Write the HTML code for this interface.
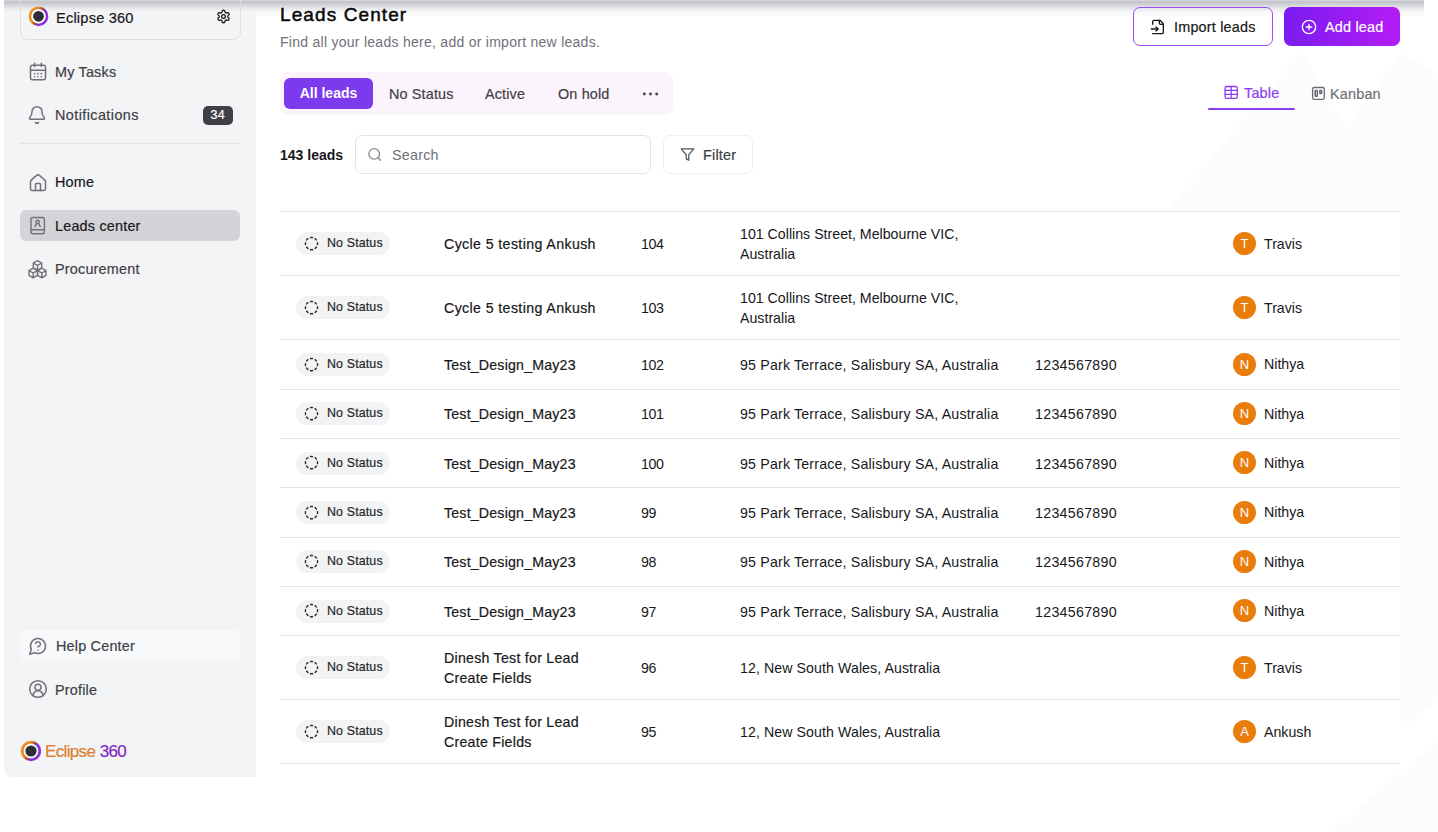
<!DOCTYPE html>
<html><head><meta charset="utf-8">
<style>
*{box-sizing:border-box;margin:0;padding:0}
html,body{width:1438px;height:832px;overflow:hidden;background:#fff;font-family:"Liberation Sans",sans-serif;color:#18181b}
.a{position:absolute;white-space:nowrap}
#side{position:absolute;left:4px;top:0;width:252px;height:777px;background:#f3f4f6;border-bottom-left-radius:8px}
#topsh{position:absolute;left:4px;top:0;width:1420px;height:17px;background:linear-gradient(#dcdde0 0,#c3c4c7 1.6px,#c8c9cc 3px,#dadbde 6px,#ebecee 9px,rgba(246,246,248,0.8) 12.5px,rgba(255,255,255,0) 17px)}
.card{position:absolute;left:20px;top:-20px;width:221px;height:59.5px;border:1px solid #dcdee2;border-radius:8px}
.nt{position:absolute;font-size:14.4px;line-height:16px;color:#3f3f46;letter-spacing:0.2px;white-space:nowrap}
.md{-webkit-text-stroke:0.2px currentColor}
.ic{position:absolute;fill:none;stroke:#71717a;stroke-width:1.8;stroke-linecap:round;stroke-linejoin:round;overflow:visible}
h1{position:absolute;left:280px;top:4px;font-size:19px;font-weight:normal;-webkit-text-stroke:0.5px #09090b;letter-spacing:1.1px;color:#09090b;line-height:22px}
.sub{position:absolute;left:280px;top:34px;font-size:14px;color:#71717a;letter-spacing:0.27px;line-height:16px}
.tabs{position:absolute;left:280px;top:72px;width:393px;height:43px;background:#fcf4fd;border-radius:7px}
.tab{position:absolute;top:6.5px;height:31px;line-height:31px;font-size:14.4px;color:#3f3f46;letter-spacing:0.15px;white-space:nowrap}
.tab.on{top:6px;left:4px;width:89px;background:#7c3aed;color:#fff;border-radius:6px;font-weight:bold;text-align:center;letter-spacing:0;font-size:14px}
.row{position:absolute;left:280px;width:1120px;border-top:1px solid #e4e4e7}
.pill{position:absolute;left:16px;width:94px;height:23px;border-radius:12px;background:#f2f3f5;font-size:12.4px;color:#27272a;letter-spacing:0.15px}
.pill svg{position:absolute;left:7px;top:3.5px}
.pill span{position:absolute;left:31px;top:4px;line-height:15px;white-space:nowrap}
.c{position:absolute;font-size:14.2px;line-height:20px;color:#18181b;letter-spacing:0.3px}
.nm{left:164px;width:175px;color:#18181b}
.num{left:361px}
.addr{left:460px;width:270px}
.ph{left:755px}
.av{position:absolute;left:953px;width:23px;height:23px;border-radius:50%;background:#ea7c0c;color:#fff;font-size:13px;text-align:center;line-height:23px}
.own{left:984px}
.btn{position:absolute;top:7px;height:39px;border-radius:7px}
</style></head><body>
<div id="side"></div>
<svg class="a" style="left:0;top:0" width="1438" height="832"><polygon points="1165,212 1302,52 1346,127 1402,52 1438,75 1438,832 1330,832 1438,740 1438,700 1400,730 1400,212" fill="#000" fill-opacity="0.013"/></svg>
<div id="topsh"></div>

<!-- workspace card -->
<div class="card"></div>
<svg class="a" style="left:28px;top:6px" width="21" height="21" viewBox="0 0 21 21">
  <defs><linearGradient id="lg1" x1="0" y1="0.25" x2="1" y2="0.75"><stop offset="0.3" stop-color="#ee8a1f"/><stop offset="0.5" stop-color="#a0522d"/><stop offset="0.62" stop-color="#8d2fd6"/></linearGradient></defs>
  <circle cx="10.5" cy="10.3" r="8.6" fill="none" stroke="url(#lg1)" stroke-width="2.5"/>
  <circle cx="10.5" cy="10.3" r="6.6" fill="#fff" opacity="0.85"/>
  <circle cx="10.5" cy="10.3" r="5.4" fill="#2d2d33"/>
</svg>
<div class="nt md" style="left:56px;top:9.5px;color:#18181b;font-size:14.6px">Eclipse 360</div>
<svg class="ic" style="left:215.5px;top:8.5px;stroke:#18181b;stroke-width:2.1" width="15" height="15" viewBox="0 0 24 24"><path d="M12.22 2h-.44a2 2 0 0 0-2 2v.18a2 2 0 0 1-1 1.730l-.43.25a2 2 0 0 1-2 0l-.15-.08a2 2 0 0 0-2.73.73l-.22.38a2 2 0 0 0 .73 2.730l.15.1a2 2 0 0 1 1 1.72v.51a2 2 0 0 1-1 1.74l-.15.09a2 2 0 0 0-.73 2.73l.22.38a2 2 0 0 0 2.73.73l.15-.08a2 2 0 0 1 2 0l.43.25a2 2 0 0 1 1 1.73V20a2 2 0 0 0 2 2h.44a2 2 0 0 0 2-2v-.18a2 2 0 0 1 1-1.73l.43-.25a2 2 0 0 1 2 0l.15.08a2 2 0 0 0 2.730-.73l.22-.39a2 2 0 0 0-.73-2.73l-.15-.08a2 2 0 0 1-1-1.74v-.5a2 2 0 0 1 1-1.74l.15-.09a2 2 0 0 0 .73-2.73l-.22-.38a2 2 0 0 0-2.73-.73l-.15.08a2 2 0 0 1-2 0l-.43-.25a2 2 0 0 1-1-1.73V4a2 2 0 0 0-2-2z"/><circle cx="12" cy="12" r="3"/></svg>

<!-- nav (lucide 20px) -->
<svg class="ic" style="left:27.5px;top:62.3px" width="20" height="20" viewBox="0 0 24 24"><rect x="3" y="4" width="18" height="17.3" rx="2"/><path d="M3 10h18M8 1.5v4M16 1.5v4"/><path d="M8 14h.01M12 14h.01M16 14h.01M8 17.7h.01M12 17.7h.01M16 17.7h.01" stroke-width="2"/></svg>
<div class="nt md" style="left:55px;top:64px">My Tasks</div>

<svg class="ic" style="left:27.4px;top:104.9px" width="20" height="20" viewBox="0 0 24 24"><path d="M10.268 21a2 2 0 0 0 3.464 0"/><path d="M3.262 15.326A1 1 0 0 0 4 17h16a1 1 0 0 0 .74-1.673C19.41 13.956 18 12.499 18 8A6 6 0 0 0 6 8c0 4.499-1.411 5.956-2.738 7.326"/></svg>
<div class="nt md" style="left:55px;top:107px;letter-spacing:0.42px">Notifications</div>
<div class="a" style="left:203px;top:106px;width:29.5px;height:19px;border-radius:5px;background:#3f3f46;color:#fff;font-size:12.5px;line-height:19px;text-align:center;letter-spacing:0.3px;-webkit-text-stroke:0.2px #fff">34</div>

<div class="a" style="left:20px;top:143px;width:220px;height:1px;background:#e2e3e6"></div>

<svg class="ic" style="left:27.5px;top:172.6px" width="20" height="20" viewBox="0 0 24 24"><path d="M15 21v-7.5a1 1 0 0 0-1-1h-4a1 1 0 0 0-1 1V21"/><path d="M3 10a2 2 0 0 1 .709-1.528l7-5.999a2 2 0 0 1 2.582 0l7 5.999A2 2 0 0 1 21 10v9a2 2 0 0 1-2 2H5a2 2 0 0 1-2-2z"/></svg>
<div class="nt md" style="left:55px;top:174px;color:#18181b">Home</div>

<div class="a" style="left:20px;top:210px;width:220px;height:31px;border-radius:6px;background:#d4d4d8"></div>
<svg class="ic" style="left:0;top:0;stroke-width:1.4" width="1" height="1"><rect x="31" y="217.5" width="13.4" height="16.3" rx="2"/><path d="M31 229.7H44.4"/><circle cx="37.6" cy="221.9" r="1.7"/><path d="M35 226.6l1.5-3M40.2 226.6l-1.5-3"/></svg>
<div class="nt md" style="left:55px;top:218px;color:#18181b">Leads center</div>

<svg class="ic" style="left:0;top:0;stroke-width:1.4" width="1" height="1">
<path d="M37.5 260.6l4.2 2.4v4.8l-4.2 2.4-4.2-2.4v-4.8z M33.3 263l4.2 2.4 4.2-2.4 M37.5 265.4v4.8"/>
<path d="M33.2 268.2l4.2 2.4v4.8l-4.2 2.4-4.2-2.4v-4.8z M29 270.6l4.2 2.4 4.2-2.4 M33.2 273v4.8"/>
<path d="M41.8 268.2l4.2 2.4v4.8l-4.2 2.4-4.2-2.4v-4.8z M37.6 270.6l4.2 2.4 4.2-2.4 M41.8 273v4.8"/>
</svg>
<div class="nt md" style="left:55px;top:261px">Procurement</div>

<div class="a" style="left:20px;top:630px;width:220px;height:31px;border-radius:6px;background:#f8f9fa"></div>
<svg class="ic" style="left:28.4px;top:635.7px" width="20" height="20" viewBox="0 0 24 24"><path d="M7.9 20A9 9 0 1 0 4 16.1L2 22Z"/><path d="M9.09 9a3 3 0 0 1 5.83 1c0 2-3 3-3 3"/><path d="M12 17h.01"/></svg>
<div class="nt md" style="left:56px;top:638px">Help Center</div>

<svg class="ic" style="left:27.6px;top:679.3px" width="20" height="20" viewBox="0 0 24 24"><path d="M18 20a6 6 0 0 0-12 0"/><circle cx="12" cy="10" r="3.6"/><circle cx="12" cy="12" r="10"/></svg>
<div class="nt md" style="left:55px;top:682px">Profile</div>

<!-- brand -->
<svg class="a" style="left:20px;top:740px" width="22" height="22" viewBox="0 0 22 22">
  <defs><linearGradient id="lg2" x1="0" y1="0.25" x2="1" y2="0.75"><stop offset="0.3" stop-color="#ee8a1f"/><stop offset="0.5" stop-color="#a0522d"/><stop offset="0.62" stop-color="#8d2fd6"/></linearGradient></defs>
  <circle cx="11" cy="11" r="8.8" fill="none" stroke="url(#lg2)" stroke-width="2.8"/>
  <circle cx="11" cy="11" r="6.6" fill="#fff" opacity="0.8"/>
  <circle cx="11" cy="11" r="5.6" fill="#2d2d33"/>
</svg>
<div class="a md" style="left:45px;top:742px;font-size:17px;line-height:20px;letter-spacing:-0.2px"><span style="color:#dc7f30;letter-spacing:-0.65px">Eclipse</span> <span style="color:#8229bd;letter-spacing:-0.7px">360</span></div>

<!-- header -->
<h1>Leads Center</h1>
<div class="sub">Find all your leads here, add or import new leads.</div>

<div class="btn" style="left:1133px;width:140px;border:1.5px solid #9b4ff0;background:transparent"></div>
<svg class="ic" style="left:1149.7px;top:19px;stroke:#18181b;stroke-width:2" width="16" height="16" viewBox="0 0 24 24"><path d="M4 22h14a2 2 0 0 0 2-2V7l-5-5H6a2 2 0 0 0-2 2v4"/><path d="M14 2v4a2 2 0 0 0 2 2h4"/><path d="M2 15h10"/><path d="m9 18 3-3-3-3"/></svg>
<div class="a md" style="left:1174px;top:18.5px;font-size:14.4px;line-height:16px;color:#18181b;letter-spacing:0.2px">Import leads</div>

<div class="btn" style="left:1284px;width:116px;background:linear-gradient(90deg,#7a1cf0,#b51cf6)"></div>
<svg class="ic" style="left:1301px;top:18.5px;stroke:#fff;stroke-width:2" width="16" height="16" viewBox="0 0 24 24"><circle cx="12" cy="12" r="10"/><path d="M8 12h8M12 8v8"/></svg>
<div class="a md" style="left:1325px;top:18.5px;font-size:14.4px;line-height:16px;color:#fff;letter-spacing:0.2px">Add lead</div>

<!-- tabs -->
<div class="tabs">
  <div class="tab on">All leads</div>
  <div class="tab md" style="left:109px">No Status</div>
  <div class="tab md" style="left:205px">Active</div>
  <div class="tab md" style="left:278px">On hold</div>
  <svg class="a" style="left:362px;top:20px" width="18" height="4" viewBox="0 0 18 4"><circle cx="2.3" cy="2" r="1.4" fill="#3f3f46"/><circle cx="8.5" cy="2" r="1.4" fill="#3f3f46"/><circle cx="14.7" cy="2" r="1.4" fill="#3f3f46"/></svg>
</div>

<!-- view toggle -->
<svg class="ic" style="left:0;top:0;stroke:#8b3ef0;stroke-width:1.3" width="1" height="1"><rect x="1225.1" y="86.5" width="12.2" height="11.8" rx="1.6"/><path d="M1225.1 90.4h12.2M1225.1 94.4h12.2M1231.2 86.5v11.8"/></svg>
<div class="a md" style="left:1244px;top:84.5px;font-size:14.4px;line-height:16px;color:#8b3ef0;letter-spacing:0.2px">Table</div>
<div class="a" style="left:1208px;top:108px;width:87px;height:2px;background:#8b3ef0;border-radius:1px"></div>
<svg class="ic" style="left:0;top:0;stroke:#6b6b73;stroke-width:1.3" width="1" height="1"><rect x="1312.6" y="87.5" width="11.7" height="11.8" rx="1.6"/><rect x="1315.2" y="90.5" width="2.1" height="5.8" rx="0.5" stroke-width="1.5"/><rect x="1319.8" y="90.5" width="1.8" height="2.9" rx="0.5" stroke-width="1.5"/></svg>
<div class="a md" style="left:1330px;top:86px;font-size:14.4px;line-height:16px;color:#71717a;letter-spacing:0.2px">Kanban</div>

<!-- toolbar -->
<div class="a" style="left:280px;top:147px;font-size:14px;line-height:16px;font-weight:bold;color:#18181b">143 leads</div>
<div class="a" style="left:355px;top:135px;width:296px;height:39px;border:1px solid #e4e4e7;border-radius:7px"></div>
<svg class="ic" style="left:0;top:0;stroke:#85858d;stroke-width:1.3" width="1" height="1"><circle cx="374.2" cy="153.9" r="5.3"/><path d="M378.1 157.8l2.4 2.5"/></svg>
<div class="a" style="left:392px;top:147px;font-size:14.4px;line-height:16px;color:#71717a;letter-spacing:0.2px">Search</div>
<div class="a" style="left:663px;top:135px;width:90px;height:39px;border:1px solid #f0f0f2;border-radius:7px"></div>
<svg class="ic" style="left:680px;top:146.8px;stroke:#52525b;stroke-width:2" width="15" height="15" viewBox="0 0 24 24"><polygon points="22 3 2 3 10 12.46 10 19 14 21 14 12.46 22 3"/></svg>
<div class="a md" style="left:703px;top:147px;font-size:14.4px;line-height:16px;color:#3f3f46;letter-spacing:0.2px">Filter</div>

<div class="row" style="top:211.4px;height:64px;"><div class="pill" style="top:20.0px"><svg width="17" height="17" viewBox="0 0 17 17"><path d="M14.41 6.07A6.1 6.1 0 0 1 14.41 9.13M13.76 10.70A6.1 6.1 0 0 1 11.60 12.86M10.03 13.51A6.1 6.1 0 0 1 6.97 13.51M5.40 12.86A6.1 6.1 0 0 1 3.24 10.70M2.59 9.13A6.1 6.1 0 0 1 2.59 6.07M3.24 4.50A6.1 6.1 0 0 1 5.40 2.34M6.97 1.69A6.1 6.1 0 0 1 10.03 1.69M11.60 2.34A6.1 6.1 0 0 1 13.76 4.50" fill="none" stroke="#27272a" stroke-width="1.35"/></svg><span class="md">No Status</span></div><div class="c nm md" style="top:22.0px;letter-spacing:0.38px">Cycle 5 testing Ankush</div><div class="c num" style="top:22.0px;letter-spacing:-0.4px">104</div><div class="c addr" style="top:12.0px;letter-spacing:0.0px">101 Collins Street, Melbourne VIC, Australia</div><div class="av" style="top:19.5px">T</div><div class="c own" style="top:21.3px;letter-spacing:0">Travis</div></div>
<div class="row" style="top:275.4px;height:64px;"><div class="pill" style="top:20.0px"><svg width="17" height="17" viewBox="0 0 17 17"><path d="M14.41 6.07A6.1 6.1 0 0 1 14.41 9.13M13.76 10.70A6.1 6.1 0 0 1 11.60 12.86M10.03 13.51A6.1 6.1 0 0 1 6.97 13.51M5.40 12.86A6.1 6.1 0 0 1 3.24 10.70M2.59 9.13A6.1 6.1 0 0 1 2.59 6.07M3.24 4.50A6.1 6.1 0 0 1 5.40 2.34M6.97 1.69A6.1 6.1 0 0 1 10.03 1.69M11.60 2.34A6.1 6.1 0 0 1 13.76 4.50" fill="none" stroke="#27272a" stroke-width="1.35"/></svg><span class="md">No Status</span></div><div class="c nm md" style="top:22.0px;letter-spacing:0.38px">Cycle 5 testing Ankush</div><div class="c num" style="top:22.0px;letter-spacing:-0.4px">103</div><div class="c addr" style="top:12.0px;letter-spacing:0.0px">101 Collins Street, Melbourne VIC, Australia</div><div class="av" style="top:19.5px">T</div><div class="c own" style="top:21.3px;letter-spacing:0">Travis</div></div>
<div class="row" style="top:339.4px;height:49.33px;"><div class="pill" style="top:12.7px"><svg width="17" height="17" viewBox="0 0 17 17"><path d="M14.41 6.07A6.1 6.1 0 0 1 14.41 9.13M13.76 10.70A6.1 6.1 0 0 1 11.60 12.86M10.03 13.51A6.1 6.1 0 0 1 6.97 13.51M5.40 12.86A6.1 6.1 0 0 1 3.24 10.70M2.59 9.13A6.1 6.1 0 0 1 2.59 6.07M3.24 4.50A6.1 6.1 0 0 1 5.40 2.34M6.97 1.69A6.1 6.1 0 0 1 10.03 1.69M11.60 2.34A6.1 6.1 0 0 1 13.76 4.50" fill="none" stroke="#27272a" stroke-width="1.35"/></svg><span class="md">No Status</span></div><div class="c nm md" style="top:14.7px;letter-spacing:0.19px">Test_Design_May23</div><div class="c num" style="top:14.7px;letter-spacing:-0.4px">102</div><div class="c addr" style="top:14.7px;letter-spacing:0.18px">95 Park Terrace, Salisbury SA, Australia</div><div class="c ph" style="top:14.7px">1234567890</div><div class="av" style="top:12.2px">N</div><div class="c own" style="top:14.0px;letter-spacing:0">Nithya</div></div>
<div class="row" style="top:388.73px;height:49.33px;"><div class="pill" style="top:12.7px"><svg width="17" height="17" viewBox="0 0 17 17"><path d="M14.41 6.07A6.1 6.1 0 0 1 14.41 9.13M13.76 10.70A6.1 6.1 0 0 1 11.60 12.86M10.03 13.51A6.1 6.1 0 0 1 6.97 13.51M5.40 12.86A6.1 6.1 0 0 1 3.24 10.70M2.59 9.13A6.1 6.1 0 0 1 2.59 6.07M3.24 4.50A6.1 6.1 0 0 1 5.40 2.34M6.97 1.69A6.1 6.1 0 0 1 10.03 1.69M11.60 2.34A6.1 6.1 0 0 1 13.76 4.50" fill="none" stroke="#27272a" stroke-width="1.35"/></svg><span class="md">No Status</span></div><div class="c nm md" style="top:14.7px;letter-spacing:0.19px">Test_Design_May23</div><div class="c num" style="top:14.7px;letter-spacing:-0.4px">101</div><div class="c addr" style="top:14.7px;letter-spacing:0.18px">95 Park Terrace, Salisbury SA, Australia</div><div class="c ph" style="top:14.7px">1234567890</div><div class="av" style="top:12.2px">N</div><div class="c own" style="top:14.0px;letter-spacing:0">Nithya</div></div>
<div class="row" style="top:438.07px;height:49.33px;"><div class="pill" style="top:12.7px"><svg width="17" height="17" viewBox="0 0 17 17"><path d="M14.41 6.07A6.1 6.1 0 0 1 14.41 9.13M13.76 10.70A6.1 6.1 0 0 1 11.60 12.86M10.03 13.51A6.1 6.1 0 0 1 6.97 13.51M5.40 12.86A6.1 6.1 0 0 1 3.24 10.70M2.59 9.13A6.1 6.1 0 0 1 2.59 6.07M3.24 4.50A6.1 6.1 0 0 1 5.40 2.34M6.97 1.69A6.1 6.1 0 0 1 10.03 1.69M11.60 2.34A6.1 6.1 0 0 1 13.76 4.50" fill="none" stroke="#27272a" stroke-width="1.35"/></svg><span class="md">No Status</span></div><div class="c nm md" style="top:14.7px;letter-spacing:0.19px">Test_Design_May23</div><div class="c num" style="top:14.7px;letter-spacing:-0.4px">100</div><div class="c addr" style="top:14.7px;letter-spacing:0.18px">95 Park Terrace, Salisbury SA, Australia</div><div class="c ph" style="top:14.7px">1234567890</div><div class="av" style="top:12.2px">N</div><div class="c own" style="top:14.0px;letter-spacing:0">Nithya</div></div>
<div class="row" style="top:487.4px;height:49.33px;"><div class="pill" style="top:12.7px"><svg width="17" height="17" viewBox="0 0 17 17"><path d="M14.41 6.07A6.1 6.1 0 0 1 14.41 9.13M13.76 10.70A6.1 6.1 0 0 1 11.60 12.86M10.03 13.51A6.1 6.1 0 0 1 6.97 13.51M5.40 12.86A6.1 6.1 0 0 1 3.24 10.70M2.59 9.13A6.1 6.1 0 0 1 2.59 6.07M3.24 4.50A6.1 6.1 0 0 1 5.40 2.34M6.97 1.69A6.1 6.1 0 0 1 10.03 1.69M11.60 2.34A6.1 6.1 0 0 1 13.76 4.50" fill="none" stroke="#27272a" stroke-width="1.35"/></svg><span class="md">No Status</span></div><div class="c nm md" style="top:14.7px;letter-spacing:0.19px">Test_Design_May23</div><div class="c num" style="top:14.7px;letter-spacing:-0.4px">99</div><div class="c addr" style="top:14.7px;letter-spacing:0.18px">95 Park Terrace, Salisbury SA, Australia</div><div class="c ph" style="top:14.7px">1234567890</div><div class="av" style="top:12.2px">N</div><div class="c own" style="top:14.0px;letter-spacing:0">Nithya</div></div>
<div class="row" style="top:536.73px;height:49.33px;"><div class="pill" style="top:12.7px"><svg width="17" height="17" viewBox="0 0 17 17"><path d="M14.41 6.07A6.1 6.1 0 0 1 14.41 9.13M13.76 10.70A6.1 6.1 0 0 1 11.60 12.86M10.03 13.51A6.1 6.1 0 0 1 6.97 13.51M5.40 12.86A6.1 6.1 0 0 1 3.24 10.70M2.59 9.13A6.1 6.1 0 0 1 2.59 6.07M3.24 4.50A6.1 6.1 0 0 1 5.40 2.34M6.97 1.69A6.1 6.1 0 0 1 10.03 1.69M11.60 2.34A6.1 6.1 0 0 1 13.76 4.50" fill="none" stroke="#27272a" stroke-width="1.35"/></svg><span class="md">No Status</span></div><div class="c nm md" style="top:14.7px;letter-spacing:0.19px">Test_Design_May23</div><div class="c num" style="top:14.7px;letter-spacing:-0.4px">98</div><div class="c addr" style="top:14.7px;letter-spacing:0.18px">95 Park Terrace, Salisbury SA, Australia</div><div class="c ph" style="top:14.7px">1234567890</div><div class="av" style="top:12.2px">N</div><div class="c own" style="top:14.0px;letter-spacing:0">Nithya</div></div>
<div class="row" style="top:586.07px;height:49.33px;"><div class="pill" style="top:12.7px"><svg width="17" height="17" viewBox="0 0 17 17"><path d="M14.41 6.07A6.1 6.1 0 0 1 14.41 9.13M13.76 10.70A6.1 6.1 0 0 1 11.60 12.86M10.03 13.51A6.1 6.1 0 0 1 6.97 13.51M5.40 12.86A6.1 6.1 0 0 1 3.24 10.70M2.59 9.13A6.1 6.1 0 0 1 2.59 6.07M3.24 4.50A6.1 6.1 0 0 1 5.40 2.34M6.97 1.69A6.1 6.1 0 0 1 10.03 1.69M11.60 2.34A6.1 6.1 0 0 1 13.76 4.50" fill="none" stroke="#27272a" stroke-width="1.35"/></svg><span class="md">No Status</span></div><div class="c nm md" style="top:14.7px;letter-spacing:0.19px">Test_Design_May23</div><div class="c num" style="top:14.7px;letter-spacing:-0.4px">97</div><div class="c addr" style="top:14.7px;letter-spacing:0.18px">95 Park Terrace, Salisbury SA, Australia</div><div class="c ph" style="top:14.7px">1234567890</div><div class="av" style="top:12.2px">N</div><div class="c own" style="top:14.0px;letter-spacing:0">Nithya</div></div>
<div class="row" style="top:635.4px;height:64px;"><div class="pill" style="top:20.0px"><svg width="17" height="17" viewBox="0 0 17 17"><path d="M14.41 6.07A6.1 6.1 0 0 1 14.41 9.13M13.76 10.70A6.1 6.1 0 0 1 11.60 12.86M10.03 13.51A6.1 6.1 0 0 1 6.97 13.51M5.40 12.86A6.1 6.1 0 0 1 3.24 10.70M2.59 9.13A6.1 6.1 0 0 1 2.59 6.07M3.24 4.50A6.1 6.1 0 0 1 5.40 2.34M6.97 1.69A6.1 6.1 0 0 1 10.03 1.69M11.60 2.34A6.1 6.1 0 0 1 13.76 4.50" fill="none" stroke="#27272a" stroke-width="1.35"/></svg><span class="md">No Status</span></div><div class="c nm md" style="top:12.0px;letter-spacing:0.25px">Dinesh Test for Lead Create Fields</div><div class="c num" style="top:22.0px;letter-spacing:-0.4px">96</div><div class="c addr" style="top:22.0px;letter-spacing:0.07px">12, New South Wales, Australia</div><div class="av" style="top:19.5px">T</div><div class="c own" style="top:21.3px;letter-spacing:0">Travis</div></div>
<div class="row" style="top:699.4px;height:65px;border-bottom:1px solid #e4e4e7"><div class="pill" style="top:20.0px"><svg width="17" height="17" viewBox="0 0 17 17"><path d="M14.41 6.07A6.1 6.1 0 0 1 14.41 9.13M13.76 10.70A6.1 6.1 0 0 1 11.60 12.86M10.03 13.51A6.1 6.1 0 0 1 6.97 13.51M5.40 12.86A6.1 6.1 0 0 1 3.24 10.70M2.59 9.13A6.1 6.1 0 0 1 2.59 6.07M3.24 4.50A6.1 6.1 0 0 1 5.40 2.34M6.97 1.69A6.1 6.1 0 0 1 10.03 1.69M11.60 2.34A6.1 6.1 0 0 1 13.76 4.50" fill="none" stroke="#27272a" stroke-width="1.35"/></svg><span class="md">No Status</span></div><div class="c nm md" style="top:12.0px;letter-spacing:0.25px">Dinesh Test for Lead Create Fields</div><div class="c num" style="top:22.0px;letter-spacing:-0.4px">95</div><div class="c addr" style="top:22.0px;letter-spacing:0.07px">12, New South Wales, Australia</div><div class="av" style="top:19.5px">A</div><div class="c own" style="top:21.3px;letter-spacing:0">Ankush</div></div>
</body></html>
